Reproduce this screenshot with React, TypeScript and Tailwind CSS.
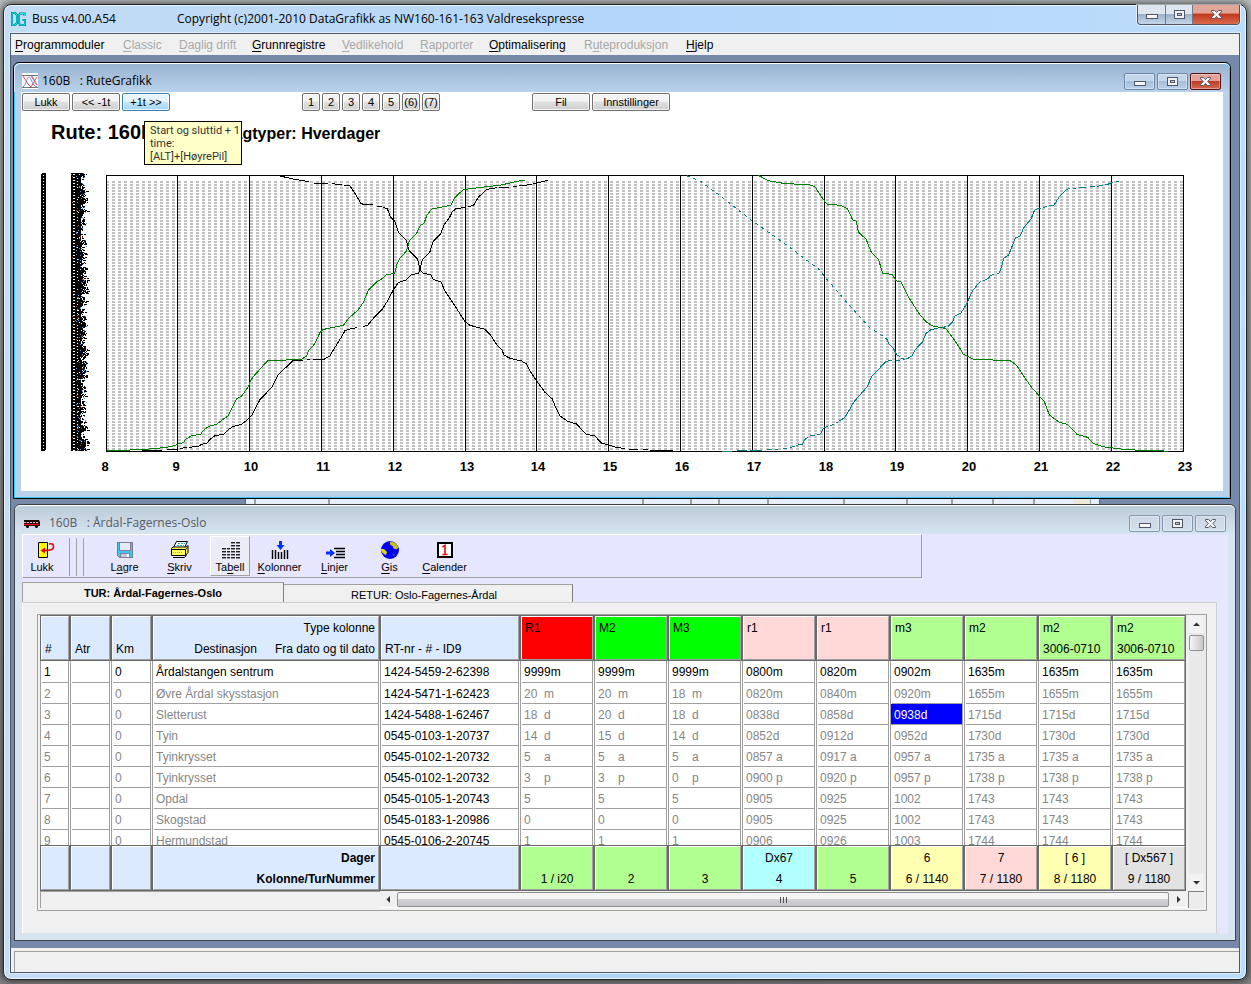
import React from "react";

const MENU = [
  { label: "Programmoduler", key: "P", on: true },
  { label: "Classic", key: "C", on: false },
  { label: "Daglig drift", key: "D", on: false },
  { label: "Grunnregistre", key: "G", on: true },
  { label: "Vedlikehold", key: "V", on: false },
  { label: "Rapporter", key: "R", on: false },
  { label: "Optimalisering", key: "O", on: true },
  { label: "Ruteproduksjon", key: "u", on: false },
  { label: "Hjelp", key: "H", on: true },
];

function Mnemonic({ label, letter }: { label: string; letter?: string }) {
  const i = letter ? label.indexOf(letter) : -1;
  if (i < 0) return <>{label}</>;
  return (
    <>
      {label.slice(0, i)}
      <span className="underline underline-offset-2">{label[i]}</span>
      {label.slice(i + 1)}
    </>
  );
}

/* ---------- window caption buttons ---------- */

function MinGlyph() {
  return (
    <svg width="13" height="13" viewBox="0 0 13 13" aria-hidden="true" shapeRendering="crispEdges">
      <rect x="1" y="6" width="12" height="5" fill="#535666" />
      <rect x="2" y="7" width="10" height="3" fill="#f6f6f6" />
    </svg>
  );
}

function MaxGlyph() {
  return (
    <svg width="13" height="13" viewBox="0 0 13 13" aria-hidden="true" shapeRendering="crispEdges">
      <rect x="1" y="2" width="11" height="9" fill="#535666" />
      <rect x="2" y="3" width="9" height="7" fill="#f2f2f2" />
      <rect x="4" y="5" width="5" height="3" fill="#535666" />
      <rect x="5" y="6" width="3" height="1" fill="#b8d0e8" />
    </svg>
  );
}

function CloseGlyph() {
  const d = "M1.5 2.5h3l2 2 2-2h3v1.2L8.7 6.5l2.8 2.8v1.2h-3l-2-2-2 2h-3V9.3l2.8-2.8-2.8-2.8z";
  return (
    <svg width="13" height="13" viewBox="0 0 13 13" aria-hidden="true">
      <path d={d} fill="#f4f4f4" stroke="#535666" strokeWidth="1" />
    </svg>
  );
}

function MainCaptionButtons() {
  return (
    <div className="flex h-5 rounded-b border border-t-0 border-[#4b5566] shadow-[0_0_0_1px_rgba(255,255,255,0.6)]">
      <button aria-label="Minimer hovedvindu" className="flex w-7 items-center justify-center rounded-bl border-r border-[#6b7a8c] bg-linear-to-b from-[#dde6ef] from-45% via-[#9db1c9] via-50% to-[#c3d5e9]">
        <MinGlyph />
      </button>
      <button aria-label="Maksimer hovedvindu" className="flex w-[27px] items-center justify-center border-r border-[#6b7a8c] bg-linear-to-b from-[#dde6ef] from-45% via-[#9db1c9] via-50% to-[#c3d5e9]">
        <MaxGlyph />
      </button>
      <button aria-label="Lukk hovedvindu" className="flex w-[46px] items-center justify-center rounded-br bg-linear-to-b from-[#e2a698] from-40% via-[#c2391f] via-50% to-[#d9694b]">
        <CloseGlyph />
      </button>
    </div>
  );
}

function ChildCaptionButtons({ active, name }: { active: boolean; name: string }) {
  const plain = active
    ? "border-[#6f86a8] bg-linear-to-b from-[#c3d6ea] from-45% via-[#a5bedb] via-50% to-[#b9d1ea]"
    : "border-[#8496b0] bg-linear-to-b from-[#cbd7e4] to-[#d3e0ec]";
  const close = active
    ? "border-[#571010] bg-linear-to-b from-[#e3a297] from-45% via-[#bd3a24] via-50% to-[#d06a52]"
    : plain;
  const base = "flex h-[17px] w-[31px] items-center justify-center rounded-xs border shadow-[inset_0_0_0_1px_rgba(255,255,255,0.35)]";
  return (
    <div className="flex gap-0.5">
      <button aria-label={`Minimer ${name}`} className={`${base} ${plain}`}>
        <MinGlyph />
      </button>
      <button aria-label={`Maksimer ${name}`} className={`${base} ${plain}`}>
        <MaxGlyph />
      </button>
      <button aria-label={`Lukk ${name}`} className={`${base} ${close}`}>
        <CloseGlyph />
      </button>
    </div>
  );
}

/* ---------- route graph ---------- */

const HOURS = [8, 9, 10, 11, 12, 13, 14, 15, 16, 17, 18, 19, 20, 21, 22, 23];
const X0 = 106;
const HOUR_W = 1077 / 15;

// Route traces on a grid of one third of a pixel.
const TRACES = [
  {
    color: "#000000",
    dash: "",
    points:
      "780,48 820,57 860,64 868,66|880,69 905,70 925,71|935,71 965,74|972,76 990,78 1010,108 1022,130 1030,133 1060,135|1072,138 1085,139|1090,143 1102,146 1112,172 1125,185 1135,217 1158,240 1168,273 1193,297 1200,330 1210,340 1232,344 1240,358 1263,366 1275,393 1300,430 1335,485 1350,496 1395,508 1410,523 1430,553 1447,572 1452,585 1470,595 1505,603 1520,612 1530,633 1550,663 1575,697 1597,717 1608,745 1620,768 1645,785 1670,792 1697,822 1725,828 1745,850 1772,856 1790,863 1814,865|1826,868 1855,869|1868,869 1885,870|1890,872 1960,872",
  },
  {
    color: "#000000",
    dash: "",
    points:
      "365,872 425,871|440,868 475,867|480,865 500,863|508,862 535,859 545,853 560,850 570,838 585,827 612,823 622,811 640,799 665,793 680,781 695,767 708,740 720,719 757,680 775,644 818,603 850,601|860,600 870,600|880,599 912,598 930,588 940,570 962,535 975,512 990,507 1010,503|1028,499 1042,497 1060,475 1085,450 1100,427 1120,390 1135,368 1160,359 1172,345 1195,340 1200,330 1203,314 1207,300 1230,275 1240,243 1262,222 1272,195 1290,170 1297,155 1308,146 1338,142|1345,139 1360,137 1375,112 1400,88 1430,83|1438,82 1468,81|1478,80 1490,79|1497,78 1535,73|1540,71 1585,61",
  },
  {
    color: "#008000",
    dash: "",
    points:
      "260,873 295,871 365,869 410,865 440,862 465,857 475,852 490,848 497,838 515,827 542,823 550,811 567,799 590,793 605,781 625,767 637,741 650,717 665,708 685,680 692,661 705,644 742,603 755,601 800,600 845,598 860,588 865,573 880,557 890,540 900,517 908,509 925,505 970,496 985,476 1015,449 1030,427 1045,391 1060,375 1070,365 1085,357 1100,344 1124,340 1130,315 1140,295 1160,272 1168,243 1190,220 1200,197 1212,190 1220,167 1235,147 1292,136 1305,112 1330,89 1400,80 1440,76 1490,64 1515,61",
  },
  {
    color: "#008000",
    dash: "",
    points:
      "2215,46 2245,62 2290,70 2370,75 2385,80 2403,108 2420,132 2460,136 2463,137 2483,147 2498,180 2508,183 2516,217 2538,237 2553,275 2576,300 2588,340 2616,343 2628,362 2643,366 2668,415 2698,462 2718,485 2738,498 2778,506 2803,540 2823,570 2830,583 2858,597 2913,598 2923,601 2968,601 2988,614 3033,680 3073,725 3088,765 3118,787 3143,793 3171,823 3203,832 3220,850 3248,860 3303,867 3358,871 3423,872 3443,874",
  },
  {
    color: "#008080",
    dash: "3 4",
    points: "2000,47 2040,63 2100,107 2200,185 2300,255 2400,330 2413,350 2433,372 2483,430 2513,464 2548,502 2583,525 2601,538",
  },
  {
    color: "#008080",
    dash: "",
    points:
      "2601,538 2605,550 2618,562 2623,570 2630,585 2640,590|2644,594 2651,597|2105,875 2135,874|2150,873 2180,872|2190,871 2225,871|2240,869 2255,868|2265,868 2275,867|2290,866 2302,864|2310,862 2325,860|2328,856 2348,852 2355,838 2365,832|2370,828 2385,825|2392,824 2401,822 2410,805 2425,798|2430,797 2443,793|2447,789 2453,787|2458,783 2475,772 2503,724 2541,681 2555,650 2598,604 2615,601|2628,601 2640,600|2648,599 2655,597|2660,597 2676,588 2685,570 2708,545 2718,520 2733,509 2755,504|2765,503 2778,500|2784,499 2798,485 2805,468 2823,459 2838,435 2858,392 2878,367 2884,365|2890,363 2905,355 2911,347 2922,343|2930,340 2937,340 2945,320 2951,295 2966,285 2986,234 3001,228 3010,205 3033,177 3043,152 3053,145 3062,144|3070,142 3080,140|3088,138 3101,137 3118,110 3140,88 3150,86|3158,85 3168,84|3178,83 3198,82|3210,80 3225,79|3232,79 3248,76|3256,75 3272,70|3274,67 3280,66|3288,64 3296,64",
  },
];

function toPath(points: string) {
  return points
    .split("|")
    .map((run) => "M" + run.trim().split(/\s+/).join("L"))
    .join("");
}

// Deterministic ragged strokes of the densely stacked stop labels.
function stackMarks() {
  let seed = 7;
  const next = () => {
    seed = (seed * 1103515245 + 12345) % 2147483648;
    return seed / 2147483648;
  };
  const ink: string[] = [];
  const holes: string[] = [];
  const blue: string[] = [];
  const rust: string[] = [];
  let w = 12;
  for (let y = 173; y < 451; y += 1) {
    w = Math.max(10, Math.min(15, w + Math.floor(next() * 5) - 2));
    ink.push(`M71 ${y}.5h${w}`);
    if (next() > 0.5) ink.push(`M${71 + w + 1} ${y}.5h${1 + Math.floor(next() * 3)}`);
    if (y % 3 === 0) holes.push(`M73 ${y}.5h2`);
    if (y % 3 === 1 && next() > 0.4) holes.push(`M77 ${y}.5h1`);
    if (next() > 0.7) holes.push(`M${78 + Math.floor(next() * 6)} ${y}.5h1`);
    if (next() > 0.55) blue.push(`M${76 + Math.floor(next() * 11)} ${y}.5h1`);
    if (next() > 0.8) rust.push(`M${71 + Math.floor(next() * 12)} ${y}.5h1`);
  }
  return { ink: ink.join(""), holes: holes.join(""), blue: blue.join(""), rust: rust.join("") };
}

const MARKS = stackMarks();

function RouteGraph() {
  return (
    <svg viewBox="21 166 1202 325" className="block h-auto w-full" role="img" aria-label="Rutegrafikk 160B, klokken 8 til 23">
      <defs>
        <pattern id="minuteGrid" x="112" y="181" width="6" height="3" patternUnits="userSpaceOnUse">
          <rect width="3" height="2" fill="#c0c0c0" />
        </pattern>
      </defs>
      <g shapeRendering="crispEdges">
        <rect x="107" y="181" width="1076" height="269" fill="url(#minuteGrid)" />
        <rect x="41" y="173" width="5" height="278" rx="2" fill="#000" />
        <path d="M43.5 175V450" stroke="#fff" strokeDasharray="1 2" />
        <path d={MARKS.ink} stroke="#000" />
        <path d={MARKS.holes} stroke="#fff" />
        <path d={MARKS.blue} stroke="#4a90d8" />
        <path d={MARKS.rust} stroke="#a85020" />
        <path d="M106 175.5H1184M106 451.5H1184" stroke="#000" />
        {HOURS.map((h, i) => (
          <path key={h} d={`M${Math.floor(X0 + i * HOUR_W) + 0.5} 175V452`} stroke="#000" />
        ))}
        <g transform="translate(20 160) scale(0.33333)" fill="none">
          {TRACES.map((t, i) => (
            <path key={i} d={toPath(t.points)} stroke={t.color} strokeDasharray={t.dash} vectorEffect="non-scaling-stroke" />
          ))}
        </g>
      </g>
      <g className="font-['Liberation_Sans',Arial,sans-serif] text-[13px] font-bold" textAnchor="middle">
        {HOURS.map((h, i) => (
          <text key={h} x={Math.floor(X0 + i * HOUR_W) + (h < 10 ? -1 : 2)} y="471">
            {h}
          </text>
        ))}
      </g>
    </svg>
  );
}

function SmallButton({ children, className, hot }: { children: React.ReactNode; className: string; hot?: boolean }) {
  const look = hot
    ? "border-[#3c7fb1] bg-linear-to-b from-[#e6f5fd] from-45% via-[#c3e6fa] via-50% to-[#a5d6f2]"
    : "border-[#707070] bg-linear-to-b from-[#f4f4f4] from-45% via-[#e0e0e0] via-50% to-[#cfcfcf]";
  return (
    <button className={`h-[18px] rounded-xs border text-center text-[11px] leading-4 shadow-[inset_0_0_0_1px_rgba(255,255,255,0.7)] ${look} ${className}`}>
      {children}
    </button>
  );
}

function GraphWindow() {
  return (
    <section className="mr-2 ml-0.5 rounded-t-md border border-black bg-[#b9d1ea] shadow-[inset_0_0_0_1px_#35c8e8]">
      <header className="flex h-[29px] items-center justify-between rounded-t-md border-t border-white bg-linear-to-b from-[#99b4d1] to-[#b9d1ea] pt-1.5 pr-[9px] pl-2 shadow-[inset_1px_0_0_#dbe8f5,inset_-1px_0_0_#35c8e8]">
        <div className="flex items-center gap-1">
          <svg width="16" height="16" viewBox="0 0 16 16" aria-hidden="true">
            <rect width="16" height="16" fill="#fff" />
            <path d="M0 2.5h16M0 14.5h16" stroke="#777" />
            <path d="M1 3l5 8 3 3 6-10" fill="none" stroke="#f05050" />
            <path d="M1 14c3-2 4-10 6-10s3 9 8 10M10 3l5 9" fill="none" stroke="#7080e0" />
            <path d="M9 3l6 9" fill="none" stroke="#f05050" />
          </svg>
          <h2 className="font-['Open_Sans','Segoe_UI',sans-serif] text-[12px] leading-4 whitespace-pre">160B   : RuteGrafikk</h2>
        </div>
        <ChildCaptionButtons active name="RuteGrafikk" />
      </header>
      <div className="mx-[7px] mb-[7px] bg-white pt-px">
        <div className="relative flex">
          <div className="flex w-[281px] gap-0.5 pl-px">
            <SmallButton className="w-12">Lukk</SmallButton>
            <SmallButton className="w-12">&lt;&lt; -1t</SmallButton>
            <SmallButton className="w-12" hot>
              +1t &gt;&gt;
            </SmallButton>
          </div>
          <div className="flex w-[230px] gap-0.5">
            {["1", "2", "3", "4", "5", "(6)", "(7)"].map((n) => (
              <SmallButton key={n} className="w-[18px]">
                {n}
              </SmallButton>
            ))}
          </div>
          <div className="flex gap-0.5">
            <SmallButton className="w-[58px]">Fil</SmallButton>
            <SmallButton className="w-[78px]">Innstillinger</SmallButton>
          </div>
          <div
            role="tooltip"
            className="absolute top-7 left-[123px] h-11 w-[98px] border border-black bg-[#ffffc8] py-0.5 pl-[5px] font-['Roboto',sans-serif] text-[11px] leading-[13px] whitespace-nowrap text-[#333]"
          >
            Start og sluttid + 1
            <br />
            time:
            <br />
            [ALT]+[HøyrePil]
          </div>
        </div>
        <div className="flex h-[55px] items-baseline pt-[9px] pl-[30px] font-bold">
          <h1 className="w-[171px] text-xl leading-6">Rute: 160B</h1>
          <p className="text-base leading-6">Dagtyper: Hverdager</p>
        </div>
        <RouteGraph />
      </div>
    </section>
  );
}

/* ---------- toolbar ---------- */

const icon = { width: 20, height: 20, viewBox: "0 0 20 20", "aria-hidden": true } as const;

function DoorIcon() {
  return (
    <svg width="28" height="20" viewBox="-4 0 28 20" aria-hidden="true">
      <g transform="translate(3 0)">
        <path d="M3.5 2.5h9v15h-9z" fill="#ffff00" stroke="#000" />
        <path d="M14 4c4-1 4.500 1 4.500 3S16 10.500 10 10.500" fill="none" stroke="#f00000" strokeWidth="1.6" />
        <path d="M5.500 10.500l4.500-3v6z" fill="#f00000" />
      </g>
    </svg>
  );
}

function DiskIcon() {
  return (
    <svg {...icon} shapeRendering="crispEdges">
      <path d="M2 2h16v16H4l-2-2z" fill="#6a8090" />
      <path d="M3 3h14v14H4l-1-1z" fill="#3cc8f4" />
      <path d="M4 2h12v9H4z" fill="#808090" />
      <path d="M5 3h10v7H5z" fill="#e8e8fc" />
      <path d="M5 13h10v5H5z" fill="#808090" />
      <path d="M6 14h8v3H6z" fill="#c8c8d0" />
      <path d="M12 14h2v3h-2z" fill="#fff" />
    </svg>
  );
}

function PrinterIcon() {
  return (
    <svg {...icon}>
      <path d="M6.500 1.500h11l-3 6h-11z" fill="#fff" stroke="#000" />
      <path d="M8 3.500h7M7 5.500h7" stroke="#10b0b0" strokeDasharray="2 1" />
      <path d="M1.500 8.500 3 7h13l2-1.500v7l-2.500 3h-14z" fill="#ffff60" stroke="#000" />
      <path d="M2 9.500h13.500l2-2M15.500 9.500v6" fill="none" stroke="#000" />
      <path d="M3 17.500h11.500l2-2" fill="none" stroke="#000" />
      <path d="M3 12.500h9" stroke="#c8a800" strokeDasharray="1 1" />
    </svg>
  );
}

function TableIcon() {
  return (
    <svg {...icon} shapeRendering="crispEdges" fill="#222">
      {[2, 5, 8, 11, 14, 17].map((y) => (
        <g key={y}>
          {y > 5 && <path d={`M2 ${y}h4v1h-4zM7 ${y}h3v1h-3z`} />}
          <path d={`M11 ${y}h4v1h-4zM16 ${y}h4v1h-4z`} />
          {y > 5 && <path d={`M2 ${y + 1}h4v1h-4zM7 ${y + 1}h3v1h-3z`} fillOpacity="0.45" />}
          <path d={`M11 ${y + 1}h4v1h-4zM16 ${y + 1}h4v1h-4z`} fillOpacity="0.45" />
        </g>
      ))}
    </svg>
  );
}

function ColumnsIcon() {
  return (
    <svg {...icon}>
      <path d="M2.500 10v9M5.500 10v9M8.500 12v7M11.500 12v7M14.500 10v9M17.500 10v9" stroke="#000" strokeWidth="1.400" />
      <path d="M9 1h3v4h2.500L10.500 10 6.500 5H9z" fill="#0030ff" />
    </svg>
  );
}

function LinesIcon() {
  return (
    <svg {...icon}>
      <path d="M9 8.500h11M11 11.500h9M11 14.500h9M9 17.500h11" stroke="#000" strokeWidth="1.400" />
      <path d="M1 11.500h4V9l5 4-5 4v-2.500H1z" fill="#0030ff" />
    </svg>
  );
}

function GlobeIcon() {
  return (
    <svg {...icon}>
      <circle cx="10" cy="10" r="9" fill="#0000f0" />
      <path d="M10 1.500c4 0 7 2 8.500 6l-2 2-3-1-1-2.500-2.500-1.500z" fill="#c8c020" />
      <path d="M1 9l3 0 3 3-1 3-2-1C2 13 1 11 1 9z" fill="#e0d820" />
      <path d="M12 14l3 0-1 2.500z" fill="#3050b0" />
    </svg>
  );
}

function CalendarIcon() {
  return (
    <svg {...icon}>
      <rect x="3" y="3" width="14" height="14" fill="#fff" stroke="#000" strokeWidth="2" />
      <path d="M7.500 7 10 5.500v9M7.500 14.500h5" fill="none" stroke="#f00000" strokeWidth="1.600" />
    </svg>
  );
}

function ToolButton({ label, letter, className, children }: { label: string; letter?: string; className: string; children: React.ReactNode }) {
  return (
    <button className={`flex h-10 flex-col items-center gap-px border pt-[3px] text-[11px] leading-[13px] ${className}`}>
      {children}
      <span>
        <Mnemonic label={label} letter={letter} />
      </span>
    </button>
  );
}

function Toolbar() {
  const flat = "w-[55px] border-transparent";
  return (
    <div role="toolbar" className="flex h-11 w-[900px] max-w-full items-start border-t border-l border-t-white border-l-white border-r border-b border-r-[#a0a0a0] border-b-[#a0a0a0] pt-px">
      <ToolButton label="Lukk" className="w-[38px] border-transparent">
        <DoorIcon />
      </ToolButton>
      <div className="mt-0.5 mr-[13px] ml-2 flex h-[38px] gap-1.5">
        <span className="w-px bg-[#a0a0a0]" />
        <span className="w-px bg-[#a0a0a0]" />
        <span className="w-px bg-[#a0a0a0]" />
      </div>
      <ToolButton label="Lagre" letter="a" className={flat}>
        <DiskIcon />
      </ToolButton>
      <ToolButton label="Skriv" letter="S" className={flat}>
        <PrinterIcon />
      </ToolButton>
      <ToolButton label="Tabell" letter="b" className="mr-0.5 ml-[3px] w-10 border-t-white border-r-[#a0a0a0] border-b-[#a0a0a0] border-l-white bg-[#ececf8]">
        <TableIcon />
      </ToolButton>
      <ToolButton label="Kolonner" letter="K" className={flat}>
        <ColumnsIcon />
      </ToolButton>
      <ToolButton label="Linjer" letter="L" className={flat}>
        <LinesIcon />
      </ToolButton>
      <ToolButton label="Gis" letter="G" className={flat}>
        <GlobeIcon />
      </ToolButton>
      <ToolButton label="Calender" letter="C" className={flat}>
        <CalendarIcon />
      </ToolButton>
    </div>
  );
}

/* ---------- timetable ---------- */

const COLUMNS = [
  { type: "R1", dates: "", head: "bg-[#ff0000]", foot: "bg-[#b1ff91]", days: "", no: "1 / i20" },
  { type: "M2", dates: "", head: "bg-[#00ff00]", foot: "bg-[#b1ff91]", days: "", no: "2" },
  { type: "M3", dates: "", head: "bg-[#00ff00]", foot: "bg-[#b1ff91]", days: "", no: "3" },
  { type: "r1", dates: "", head: "bg-[#ffd8d8]", foot: "bg-[#b1ffff]", days: "Dx67", no: "4" },
  { type: "r1", dates: "", head: "bg-[#ffd8d8]", foot: "bg-[#b1ff91]", days: "", no: "5" },
  { type: "m3", dates: "", head: "bg-[#b1ff91]", foot: "bg-[#ffffb1]", days: "6", no: "6 / 1140" },
  { type: "m2", dates: "", head: "bg-[#b1ff91]", foot: "bg-[#ffd8d8]", days: "7", no: "7 / 1180" },
  { type: "m2", dates: "3006-0710", head: "bg-[#b1ff91]", foot: "bg-[#ffffb1]", days: "[ 6 ]", no: "8 / 1180" },
  { type: "m2", dates: "3006-0710", head: "bg-[#b1ff91]", foot: "bg-[#e2e2e2]", days: "[ Dx567 ]", no: "9 / 1180" },
];

const ROWS = [
  { name: "Årdalstangen sentrum", id: "1424-5459-2-62398", t: ["9999m", "9999m", "9999m", "0800m", "0820m", "0902m", "1635m", "1635m", "1635m"] },
  { name: "Øvre Årdal skysstasjon", id: "1424-5471-1-62423", t: ["20  m", "20  m", "18  m", "0820m", "0840m", "0920m", "1655m", "1655m", "1655m"] },
  { name: "Sletterust", id: "1424-5488-1-62467", t: ["18  d", "20  d", "18  d", "0838d", "0858d", "0938d", "1715d", "1715d", "1715d"] },
  { name: "Tyin", id: "0545-0103-1-20737", t: ["14  d", "15  d", "14  d", "0852d", "0912d", "0952d", "1730d", "1730d", "1730d"] },
  { name: "Tyinkrysset", id: "0545-0102-1-20732", t: ["5    a", "5    a", "5    a", "0857 a", "0917 a", "0957 a", "1735 a", "1735 a", "1735 a"] },
  { name: "Tyinkrysset", id: "0545-0102-1-20732", t: ["3    p", "3    p", "0    p", "0900 p", "0920 p", "0957 p", "1738 p", "1738 p", "1738 p"] },
  { name: "Opdal", id: "0545-0105-1-20743", t: ["5", "5", "5", "0905", "0925", "1002", "1743", "1743", "1743"] },
  { name: "Skogstad", id: "0545-0183-1-20986", t: ["0", "0", "0", "0905", "0925", "1002", "1743", "1743", "1743"] },
  { name: "Hermundstad", id: "0545-0106-2-20745", t: ["1", "1", "1", "0906", "0926", "1003", "1744", "1744", "1744"] },
];

function CapCell({ fill, children, foot }: { fill: string; children?: React.ReactNode; foot?: boolean }) {
  const cell = "border-y border-l-2 border-[#696969] p-0 text-left align-top font-normal first:border-l";
  const inner = (
    <div className={`h-11 border-t border-r border-b border-l border-t-white border-r-[#a0a0a0] border-b-[#a0a0a0] border-l-white pt-px leading-[21px] whitespace-pre ${fill}`}>
      {children}
    </div>
  );
  return foot ? <td className={cell}>{inner}</td> : <th scope="col" className={cell}>{inner}</th>;
}

function BodyCell({ children, size, tone, selected }: { children?: React.ReactNode; size: string; tone: string; selected?: boolean }) {
  return (
    <td className="p-0 pl-px first:pl-0">
      <div className={`border-r border-l border-[#a0a0a0] ${selected ? "bg-[#0000ff] text-white" : `bg-white pl-px ${tone}`}`}>
        <div className={`overflow-hidden leading-[22px] whitespace-pre ${size} ${selected ? "pl-[3px]" : "pl-0.5"}`}>{children}</div>
      </div>
    </td>
  );
}

function Timetable() {
  const head = "bg-[#dbeaff]";
  return (
    <table className="w-full table-fixed border-separate border-spacing-0 border-r border-[#696969] bg-white text-[12px]">
      <colgroup>
        <col className="w-[29px]" />
        <col className="w-[41px]" />
        <col className="w-[41px]" />
        <col />
        <col className="w-[140px]" />
        {COLUMNS.map((c) => (
          <col key={c.no} className="w-[74px]" />
        ))}
      </colgroup>
      <thead>
        <tr>
          <CapCell fill={head}>
            <span className="block pt-[21px] pl-[3px]">#</span>
          </CapCell>
          <CapCell fill={head}>
            <span className="block pt-[21px] pl-[3px]">Atr</span>
          </CapCell>
          <CapCell fill={head}>
            <span className="block pt-[21px] pl-[3px]">Km</span>
          </CapCell>
          <CapCell fill={head}>
            <span className="block pr-[3px] text-right">Type kolonne</span>
            <span className="flex justify-end gap-[18px] pr-[3px]">
              <span>Destinasjon</span>
              <span>Fra dato og til dato</span>
            </span>
          </CapCell>
          <CapCell fill={head}>
            <span className="block pt-[21px] pl-[3px]">RT-nr - # - ID9</span>
          </CapCell>
          {COLUMNS.map((c) => (
            <CapCell key={c.no} fill={c.head}>
              <span className="block pl-[3px]">{c.type}</span>
              <span className="block pl-[3px]">{c.dates}</span>
            </CapCell>
          ))}
        </tr>
      </thead>
      <tbody>
        {ROWS.map((r, i) => {
          const size = i === 0 ? "h-[22px] border-b border-[#a0a0a0]" : i === 8 ? "h-[15px]" : "h-[21px] border-b border-[#a0a0a0]";
          const tone = i === 0 ? "text-black" : "text-[#868686]";
          return (
            <tr key={r.id + i}>
              <BodyCell size={size} tone={tone}>
                {i + 1}
              </BodyCell>
              <BodyCell size={size} tone={tone} />
              <BodyCell size={size} tone={tone}>
                0
              </BodyCell>
              <BodyCell size={size} tone={tone}>
                {r.name}
              </BodyCell>
              <BodyCell size={size} tone="text-black">
                {r.id}
              </BodyCell>
              {r.t.map((v, j) => (
                <BodyCell key={j} size={size} tone={tone} selected={i === 2 && j === 5}>
                  {v}
                </BodyCell>
              ))}
            </tr>
          );
        })}
      </tbody>
      <tfoot>
        <tr>
          <CapCell foot fill={head} />
          <CapCell foot fill={head} />
          <CapCell foot fill={head} />
          <CapCell foot fill={head}>
            <span className="block pr-[3px] text-right font-bold">Dager</span>
            <span className="block pr-[3px] text-right font-bold">Kolonne/TurNummer</span>
          </CapCell>
          <CapCell foot fill={head} />
          {COLUMNS.map((c) => (
            <CapCell key={c.no} foot fill={c.foot}>
              <span className="block h-[21px] text-center">{c.days}</span>
              <span className="block text-center">{c.no}</span>
            </CapCell>
          ))}
        </tr>
      </tfoot>
    </table>
  );
}

function Arrow({ d }: { d: string }) {
  return (
    <svg width="7" height="7" viewBox="0 0 7 7" aria-hidden="true">
      <path d={d} fill="#303030" />
    </svg>
  );
}

function TimetableWindow() {
  return (
    <section className="mr-[3px] ml-[3px] rounded-t-md border border-[#404048] bg-[#d7e4f2]">
      <header className="flex h-[29px] items-center justify-between rounded-t-md border-t border-white bg-linear-to-b from-[#bccbd9] to-[#d7e4f2] pt-1.5 pr-[9px] pl-2">
        <div className="flex items-center gap-2">
          <svg width="18" height="9" viewBox="0 0 18 9" aria-hidden="true">
            <path d="M1 1h15l1 2v4H1z" fill="#200808" />
            <path d="M1 3.500h15" stroke="#c8c8c8" strokeDasharray="2 1" />
            <path d="M1 5.500h15" stroke="#e01010" strokeWidth="1.500" />
            <circle cx="4.500" cy="7.500" r="1.500" />
            <circle cx="13.500" cy="7.500" r="1.500" />
          </svg>
          <h2 className="font-['Open_Sans','Segoe_UI',sans-serif] text-[12px] leading-4 whitespace-pre text-[#555c66]">160B   : Årdal-Fagernes-Oslo</h2>
        </div>
        <ChildCaptionButtons active={false} name="Årdal-Fagernes-Oslo" />
      </header>
      <div className="mx-[7px] mb-[7px] bg-[#e6e6ff]">
        <Toolbar />
        <div role="tablist" className="flex h-6 items-end text-[11px]">
          <button role="tab" aria-selected="true" className="h-5 w-[262px] border-t border-r border-l border-[#a0a0a0] border-r-[#808080] bg-[#f0f0f0] pt-0.5 font-bold">
            TUR: Årdal-Fagernes-Oslo
          </button>
          <button role="tab" aria-selected="false" className="h-[18px] w-[289px] border-t border-r border-[#a0a0a0] border-r-[#808080] bg-[#f0f0f0] pt-0.5 pr-2">
            RETUR: Oslo-Fagernes-Årdal
          </button>
        </div>
        <div role="tabpanel" className="mr-[11px] border-t border-r border-l border-[#d0d0d0] border-l-white bg-[#f0f0f0] pt-[11px] pr-[9px] pb-[22px] pl-3.5">
          <div className="border border-[#a0a0a0] pb-0.5 pl-0.5">
            <div className="flex">
              <div className="min-w-0 flex-1">
                <Timetable />
              </div>
              <div className="ml-[3px] flex w-[17px] flex-col items-center bg-[#e9e9e9] pr-0.5">
                <button aria-label="Rull opp" className="flex h-[18px] w-full items-center justify-center bg-[#f2f2f2]">
                  <Arrow d="M0 5 3.500 1.500 7 5z" />
                </button>
                <div className="mt-0.5 h-4 w-[15px] rounded-xs border border-[#909090] bg-linear-to-r from-[#f5f5f5] to-[#c8c8c8]" />
                <button aria-label="Rull ned" className="mt-auto flex h-[17px] w-full items-center justify-center bg-[#f2f2f2]">
                  <Arrow d="M0 2 3.500 5.500 7 2z" />
                </button>
              </div>
            </div>
            <div className="flex h-[17px]">
              <div className="w-[340px] border-t border-l border-[#a0a0a0]" />
              <button aria-label="Rull til venstre" className="flex w-[17px] items-center justify-center border-b border-white">
                <Arrow d="M5 0 1.500 3.500 5 7z" />
              </button>
              <div className="my-px flex flex-1 items-center justify-center gap-px rounded-xs border border-[#909090] bg-linear-to-b from-[#f4f4f4] from-45% via-[#d2d2d6] via-50% to-[#c4c4c8]">
                <span className="mr-px h-1.5 w-px bg-[#505050]" />
                <span className="mr-px h-1.5 w-px bg-[#505050]" />
                <span className="h-1.5 w-px bg-[#505050]" />
              </div>
              <button aria-label="Rull til høyre" className="flex w-[19px] items-center justify-center border-b border-white">
                <Arrow d="M2 0 5.500 3.500 2 7z" />
              </button>
              <div className="mr-0.5 w-4 border-t border-l border-[#808080] bg-[#ececec]" />
            </div>
          </div>
        </div>
      </div>
    </section>
  );
}

export default function App() {
  return (
    <div className="min-h-screen bg-linear-to-b from-[#b8bcbc] via-[#989898] to-[#808080] pt-1 pr-1 pb-1 pl-[3px] font-['Liberation_Sans',Arial,sans-serif] text-black">
      <div className="rounded-lg border border-[#20262e] bg-linear-to-r from-[#c4dcf4] via-[#b3d6fa] to-[#bcdcfb] px-1.5 pb-1.5 shadow-[inset_0_0_0_1px_#e8f4ff,0_0_6px_2px_rgba(0,0,0,0.5)]">
        <header className="flex h-7 items-start justify-between pl-px">
          <div className="flex h-7 items-center font-['Open_Sans','Segoe_UI',sans-serif] text-[12px]">
            <svg width="15" height="14" viewBox="0 0 15 14" className="mr-1.5" aria-hidden="true">
              <path d="M1 1h3l2 2v8l-2 2H1z" fill="none" stroke="#0a8080" strokeWidth="2" />
              <path d="M13.500 4V1.500H9L8 3v8l1 2h5V8h-2.500" fill="none" stroke="#0a8080" strokeWidth="2" />
              <path d="M1 1h3l2 2v8l-2 2H1zM13.500 4V1.500H9L8 3v8l1 2h5V8h-2.500" fill="none" stroke="#00e8f0" />
            </svg>
            <span className="w-[145px]">Buss v4.00.A54</span>
            <span>Copyright (c)2001-2010 DataGrafikk as NW160-161-163 Valdresekspresse</span>
          </div>
          <MainCaptionButtons />
        </header>
        <div className="border border-[#4c5a6c] bg-[#7789a8] shadow-[0_0_0_1px_#dcecfb]">
          <nav className="grid h-[21px] grid-cols-[108px_56px_73px_90px_78px_69px_95px_102px_auto] items-center justify-start bg-[#f0f0f0] pl-1 text-[12px]">
            {MENU.map((m) => (
              <a key={m.label} href="#" className={m.on ? "text-black" : "text-[#a8a8a8]"}>
                <Mnemonic label={m.label} letter={m.key} />
              </a>
            ))}
          </nav>
          <main className="pt-[7px] pb-[7px]">
            <GraphWindow />
            <div className="mr-[139px] ml-[234px] flex h-[5px] border-x border-[#606060] bg-[#e6effa]">
              <span className="w-2.5 border-r-2 border-[#a0a0a0]" />
              <span className="w-[74px] border-r-2 border-[#a0a0a0]" />
              <span className="flex-1 border-r-2 border-[#a0a0a0]" />
              <span className="w-12 border-r-2 border-[#a0a0a0]" />
              <span className="w-7 border-r-2 border-[#a0a0a0]" />
              <span className="w-[49px] border-r-2 border-[#a0a0a0]" />
              <span className="w-[76px] border-r-2 border-[#a0a0a0]" />
              <span className="w-[63px] border-r-2 border-[#a0a0a0]" />
              <span className="w-[45px] border-r-2 border-[#a0a0a0]" />
              <span className="w-[41px] border-r-2 border-[#a0a0a0]" />
              <span className="w-[41px] border-r-2 border-[#a0a0a0]" />
              <span className="w-[38px]" />
              <span className="w-[18px] border-r border-[#a0a0a0] bg-[#ece9d8]" />
              <span className="w-2" />
            </div>
            <TimetableWindow />
          </main>
          <footer className="bg-[#f0f0f0] pt-[3px] pl-[3px]">
            <div className="h-[21px] border-t border-l border-[#a0a0a0]" />
          </footer>
        </div>
      </div>
    </div>
  );
}
